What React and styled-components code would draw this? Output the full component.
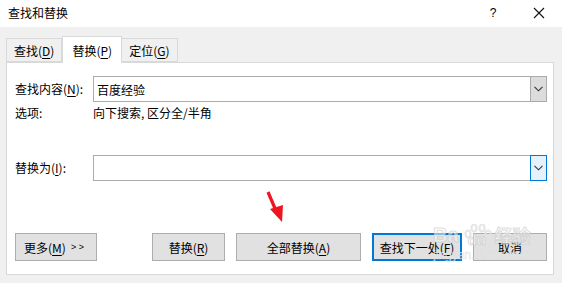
import React from 'react';
import styled, { createGlobalStyle } from 'styled-components';

const GlobalStyle = createGlobalStyle`
  html, body {
    margin: 0;
    padding: 0;
    background: #f0f0f0;
  }
  body {
    font-family: "Noto Sans CJK SC", "Liberation Sans", sans-serif;
    font-size: 12px;
    color: #000;
  }
`;

const TABS = [
  { label: '查找', key: 'D' },
  { label: '替换', key: 'P', active: true },
  { label: '定位', key: 'G' },
];

const Key = ({ k }) => <U>{k}</U>;

const App = () => {
  return (
    <Dialog>
      <GlobalStyle />
      <TitleBar>
        <Title>查找和替换</Title>
        <TitleButtons>
          <Help>?</Help>
          <Close>
            <svg width="12" height="12" viewBox="0 0 12 12">
              <path d="M1 1 L11 11 M11 1 L1 11" stroke="#111" strokeWidth="1.1" />
            </svg>
          </Close>
        </TitleButtons>
      </TitleBar>
      <Body>
        <Tabs>
          {TABS.map((t) => (
            <Tab key={t.key} active={t.active}>
              {t.label}(<Key k={t.key} />)
            </Tab>
          ))}
        </Tabs>
        <Panel>
          <Form>
            <Label>查找内容(<Key k="N" />):</Label>
            <Combo>
              <ComboText>百度经验</ComboText>
              <DropButton>
                <Chevron />
              </DropButton>
            </Combo>
            <Label>选项:</Label>
            <OptionText>向下搜索, 区分全/半角</OptionText>
          </Form>
          <Form replace>
            <Label>替换为(<Key k="I" />):</Label>
            <Combo>
              <ComboText />
              <DropButton focused>
                <Chevron />
              </DropButton>
            </Combo>
          </Form>
          <ButtonRow>
            <Button width={82} left>
              更多(<Key k="M" />) <Small>&gt; &gt;</Small>
            </Button>
            <Spacer />
            <Button width={73}>替换(<Key k="R" />)</Button>
            <Button width={125}>全部替换(<Key k="A" />)</Button>
            <Button width={90} primary>查找下一处(<Key k="F" />)</Button>
            <Button width={74}>取消</Button>
          </ButtonRow>
          <Arrow width="20" height="32" viewBox="0 0 20 32">
            <path d="M2 1 L10.5 21" stroke="#f0141e" strokeWidth="3.2" />
            <path d="M4 18 L17 14 L16 31 Z" fill="#f0141e" />
          </Arrow>
          <Watermark>
            <WmTop>
              <WmText>Ba</WmText>
              <Paw>
                <svg width="30" height="24" viewBox="0 0 30 24">
                  <g fill="none" stroke="#e4e4e4" strokeWidth="2.2">
                    <ellipse cx="5" cy="10" rx="2.5" ry="3.5" />
                    <ellipse cx="11" cy="4" rx="2.5" ry="3.5" />
                    <ellipse cx="19" cy="4" rx="2.5" ry="3.5" />
                    <ellipse cx="25" cy="10" rx="2.5" ry="3.5" />
                  </g>
                </svg>
                <PawDu>du</PawDu>
              </Paw>
              <WmText cjk>经验</WmText>
            </WmTop>
            <WmUrl>jingyan.baidu.com</WmUrl>
          </Watermark>
        </Panel>
      </Body>
    </Dialog>
  );
};

const Chevron = () => (
  <svg width="9" height="6" viewBox="0 0 9 6">
    <path d="M0.5 0.8 L4.5 4.8 L8.5 0.8" stroke="#333" strokeWidth="1.1" fill="none" />
  </svg>
);

export default App;

const Dialog = styled.div`
  width: 562px;
  height: 283px;
  background: #f0f0f0;
  overflow: hidden;
`;
const TitleBar = styled.div`
  height: 27px;
  background: #fff;
  display: flex;
  align-items: center;
  justify-content: space-between;
  padding-left: 8px;
`;
const Title = styled.div`
  font-size: 12px;
  line-height: 16px;
  margin-top: -1px;
`;
const TitleButtons = styled.div`
  display: flex;
  align-items: center;
  height: 100%;
`;
const Help = styled.div`
  width: 46px;
  text-align: center;
  font-family: "Liberation Sans", sans-serif;
  font-size: 12px;
  margin-top: -2px;
  margin-left: 4px;
`;
const Close = styled.div`
  width: 46px;
  display: flex;
  justify-content: center;
  margin-top: -2px;
`;
const Body = styled.div`
  padding: 9px 8px 0 6px;
`;
const Tabs = styled.div`
  display: flex;
  align-items: flex-end;
  height: 26px;
  position: relative;
  z-index: 1;
`;
const Tab = styled.div`
  height: ${(p) => (p.active ? '27px' : '24px')};
  margin-bottom: ${(p) => (p.active ? '-1px' : '0')};
  padding: 0 ${(p) => (p.active ? '9px' : '7px')};
  box-sizing: border-box;
  border: 1px solid #d9d9d9;
  border-bottom: ${(p) => (p.active ? 'none' : '1px solid #d9d9d9')};
  margin-left: ${(p) => (p.active ? '0' : '-1px')};
  &:first-child { margin-left: 0; }
  background: ${(p) => (p.active ? '#fff' : '#f0f0f0')};
  display: flex;
  align-items: center;
  padding-top: ${(p) => (p.active ? '0' : '1px')};
  font-size: 12px;
  white-space: nowrap;
`;
const U = styled.span`
  text-decoration: underline;
  text-underline-offset: 2px;
`;
const Panel = styled.div`
  position: relative;
  height: 213px;
  box-sizing: border-box;
  background: #fff;
  border: 1px solid #d9d9d9;
  padding: 13px 6px 0 8px;
`;
const Form = styled.div`
  display: grid;
  grid-template-columns: 78px 1fr;
  row-gap: 3px;
  align-items: center;
  margin-top: ${(p) => (p.replace ? '34px' : '0')};
`;
const Label = styled.div`
  font-size: 12px;
  line-height: 16px;
  white-space: nowrap;
`;
const OptionText = styled.div`
  font-size: 12px;
  line-height: 16px;
`;
const Combo = styled.div`
  display: flex;
  height: 26px;
  box-sizing: border-box;
  border: 1px solid #ababab;
  background: #fff;
`;
const ComboText = styled.div`
  flex: 1;
  padding: 0 3px;
  display: flex;
  align-items: center;
  font-size: 12px;
`;
const DropButton = styled.div`
  width: 17px;
  margin: -1px -1px -1px 0;
  box-sizing: border-box;
  border: 1px solid ${(p) => (p.focused ? '#0078d7' : '#ababab')};
  background: ${(p) => (p.focused ? '#e5f1fb' : '#dcdcdc')};
  display: flex;
  align-items: center;
  justify-content: center;
`;
const ButtonRow = styled.div`
  display: flex;
  gap: 11px;
  margin-top: 52px;
`;
const Spacer = styled.div`
  flex: 1;
`;
const Button = styled.div`
  width: ${(p) => p.width}px;
  height: 28px;
  box-sizing: border-box;
  background: #e1e1e1;
  border: ${(p) => (p.primary ? '2px solid #0078d7' : '1px solid #adadad')};
  display: flex;
  align-items: center;
  justify-content: ${(p) => (p.left ? 'flex-start' : 'center')};
  padding-left: ${(p) => (p.left ? '8px' : '0')};
  font-size: 12px;
  white-space: nowrap;
`;
const Small = styled.span`
  font-family: "Liberation Sans", sans-serif;
  font-size: 9px;
  margin-left: 5px;
`;
const Arrow = styled.svg`
  position: absolute;
  left: 259px;
  top: 128px;
`;
const Watermark = styled.div`
  position: absolute;
  left: 426px;
  top: 161px;
  display: flex;
  flex-direction: column;
  pointer-events: none;
  opacity: 0.9;
`;
const WmTop = styled.div`
  display: flex;
  align-items: flex-end;
`;
const WmText = styled.span`
  font-family: ${(p) => (p.cjk ? '"Noto Sans CJK SC", sans-serif' : '"Liberation Sans", sans-serif')};
  font-size: ${(p) => (p.cjk ? '18px' : '20px')};
  font-weight: bold;
  line-height: 22px;
  color: rgba(255, 255, 255, 0.6);
  -webkit-text-stroke: 1px rgba(205, 205, 205, 0.75);
  margin-left: ${(p) => (p.cjk ? '2px' : '0')};
`;
const Paw = styled.div`
  position: relative;
  width: 30px;
  height: 24px;
  margin-left: 4px;
  margin-bottom: -2px;
`;
const PawDu = styled.span`
  position: absolute;
  left: 5px;
  top: 7px;
  font-family: "Liberation Sans", sans-serif;
  font-size: 15px;
  font-weight: bold;
  color: rgba(255, 255, 255, 0.6);
  -webkit-text-stroke: 1px rgba(205, 205, 205, 0.75);
`;
const WmUrl = styled.span`
  font-family: "Liberation Sans", sans-serif;
  font-size: 12px;
  line-height: 14px;
  margin-top: 2px;
  color: rgba(255, 255, 255, 0.6);
  -webkit-text-stroke: 0.5px rgba(215, 215, 215, 0.8);
`;
